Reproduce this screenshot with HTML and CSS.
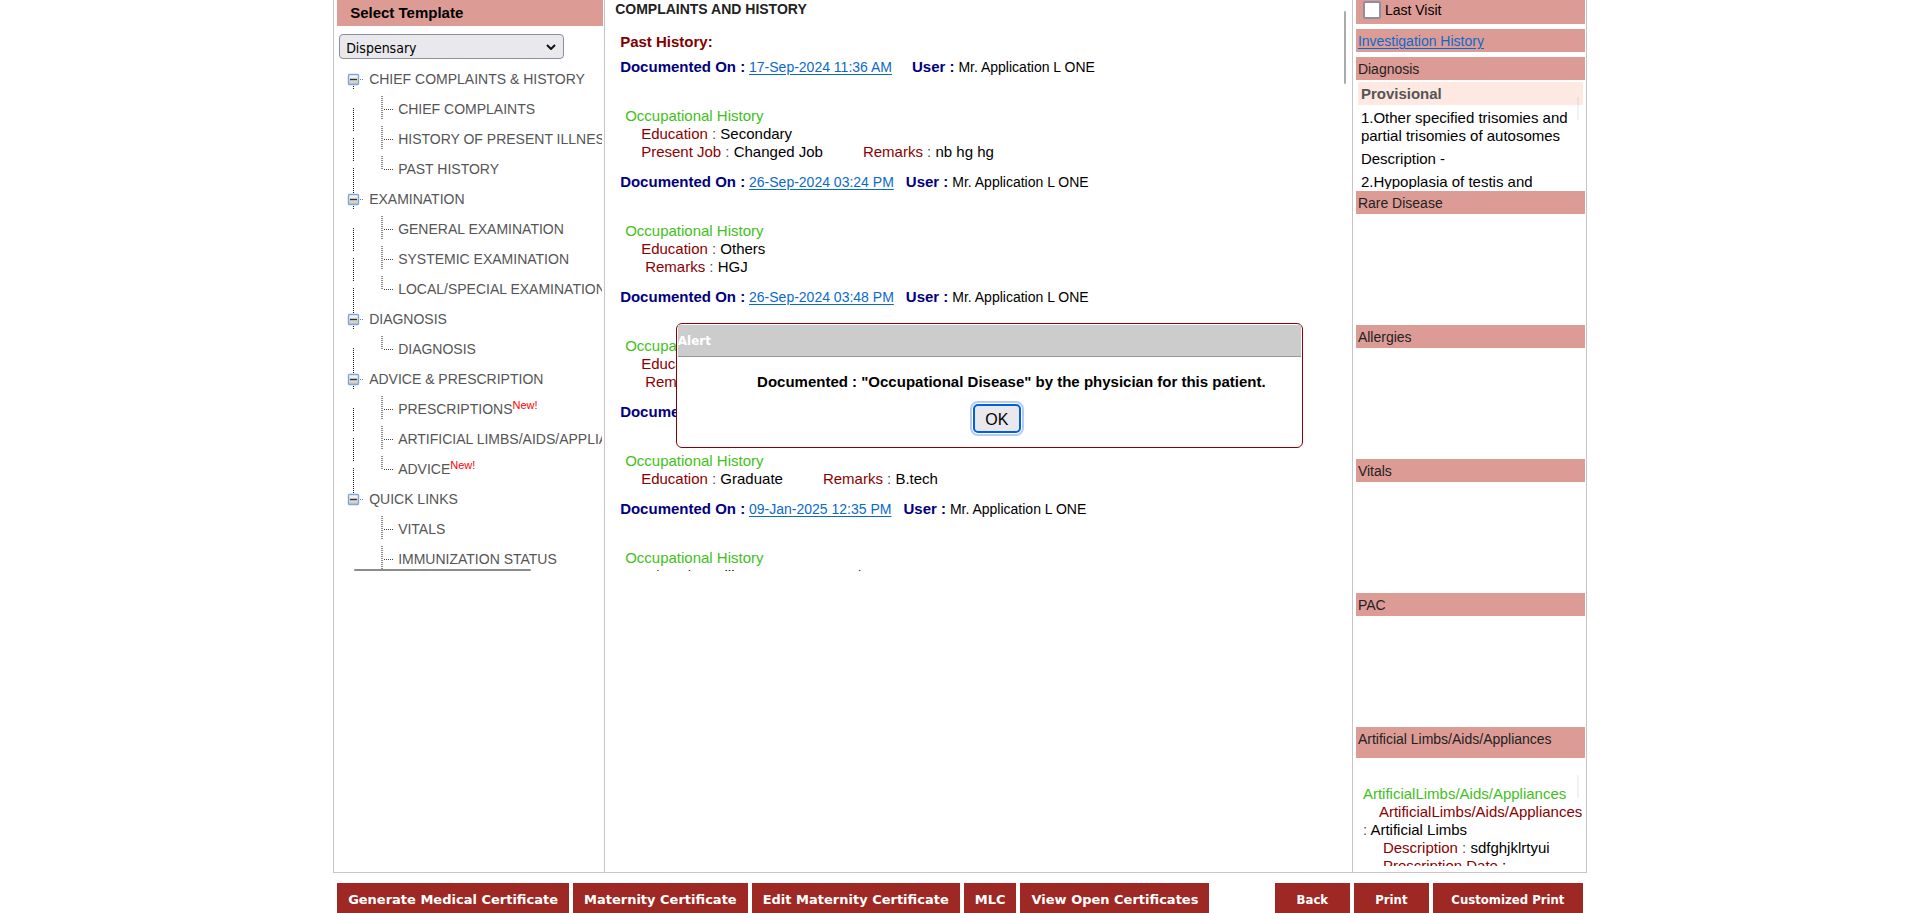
FILE: index.html
```
<!DOCTYPE html>
<html lang="en">
<head>
<meta charset="utf-8">
<title>Patient Visit Summary</title>
<link rel="stylesheet" href="styles.css">
</head>
<body>
<svg class="defs" width="0" height="0" aria-hidden="true">
  <defs>
    <linearGradient id="face" x1="0" y1="0" x2="0" y2="1">
      <stop offset="0" stop-color="#ffffff"/><stop offset="1" stop-color="#c9c5b8"/>
    </linearGradient>
    <g id="toggle">
      <rect x="3.5" y="8.5" width="10" height="10" rx="1" fill="url(#face)" stroke="#7ba6dc" stroke-width="1.4"/>
      <path d="M5 13.5h7" stroke="#333" stroke-width="1.4"/>
      <path d="M15 13.5h4" stroke="#777" stroke-dasharray="1 1"/>
    </g>
    <path id="up" d="M8.5 0v8" stroke="#111" stroke-dasharray="1 1"/>
    <path id="down" d="M8.5 20v4" stroke="#111" stroke-dasharray="1 1"/>
    <path id="trunk" d="M8.5 12v24" stroke="#111" stroke-dasharray="1 1"/>
    <path id="teebar" d="M37 0v24" stroke="#888" stroke-width="2" stroke-dasharray="1 1"/>
    <path id="endbar" d="M37 0v14" stroke="#888" stroke-width="2" stroke-dasharray="1 1"/>
    <path id="arm" d="M39 13.5h9" stroke="#444" stroke-dasharray="1 1"/>
  </defs>
</svg>

<main class="frame">
  <aside class="templates">
    <div class="pane">
      <h2 class="bar bar-title"><label for="template">Select Template</label></h2>
      <div class="picker">
        <select id="template"><option>Dispensary</option></select>
        <svg class="chevron" width="10" height="6" viewBox="0 0 10 6" aria-hidden="true"><path d="M1 1l4 4 4-4" fill="none" stroke="#111" stroke-width="2"/></svg>
      </div>
      <ul class="tree">
        <li class="node parent"><svg class="guide"><use href="#toggle"/><use href="#down"/></svg>CHIEF COMPLAINTS &amp; HISTORY</li>
        <li class="node"><svg class="guide"><use href="#trunk"/><use href="#teebar"/><use href="#arm"/></svg>CHIEF COMPLAINTS</li>
        <li class="node"><svg class="guide"><use href="#trunk"/><use href="#teebar"/><use href="#arm"/></svg>HISTORY OF PRESENT ILLNESS</li>
        <li class="node"><svg class="guide"><use href="#trunk"/><use href="#endbar"/><use href="#arm"/></svg>PAST HISTORY</li>
        <li class="node parent"><svg class="guide"><use href="#up"/><use href="#toggle"/><use href="#down"/></svg>EXAMINATION</li>
        <li class="node"><svg class="guide"><use href="#trunk"/><use href="#teebar"/><use href="#arm"/></svg>GENERAL EXAMINATION</li>
        <li class="node"><svg class="guide"><use href="#trunk"/><use href="#teebar"/><use href="#arm"/></svg>SYSTEMIC EXAMINATION</li>
        <li class="node"><svg class="guide"><use href="#trunk"/><use href="#endbar"/><use href="#arm"/></svg>LOCAL/SPECIAL EXAMINATION</li>
        <li class="node parent"><svg class="guide"><use href="#up"/><use href="#toggle"/><use href="#down"/></svg>DIAGNOSIS</li>
        <li class="node"><svg class="guide"><use href="#trunk"/><use href="#endbar"/><use href="#arm"/></svg>DIAGNOSIS</li>
        <li class="node parent"><svg class="guide"><use href="#up"/><use href="#toggle"/><use href="#down"/></svg>ADVICE &amp; PRESCRIPTION</li>
        <li class="node"><svg class="guide"><use href="#trunk"/><use href="#teebar"/><use href="#arm"/></svg>PRESCRIPTIONS<sup class="new">New!</sup></li>
        <li class="node"><svg class="guide"><use href="#trunk"/><use href="#teebar"/><use href="#arm"/></svg>ARTIFICIAL LIMBS/AIDS/APPLIANCES</li>
        <li class="node"><svg class="guide"><use href="#trunk"/><use href="#endbar"/><use href="#arm"/></svg>ADVICE<sup class="new">New!</sup></li>
        <li class="node parent"><svg class="guide"><use href="#up"/><use href="#toggle"/></svg>QUICK LINKS</li>
        <li class="node"><svg class="guide"><use href="#teebar"/><use href="#arm"/></svg>VITALS</li>
        <li class="node"><svg class="guide"><use href="#teebar"/><use href="#arm"/></svg>IMMUNIZATION STATUS</li>
      </ul>
      <span class="thumb thumb-x"></span>
    </div>
  </aside>

  <section class="history">
    <div class="pane">
      <h1 class="heading">COMPLAINTS AND HISTORY</h1>
      <h2 class="subheading">Past History:</h2>

      <article class="entry">
        <p class="stamp"><b>Documented On :</b> <a href="#e1">17-Sep-2024 11:36 AM</a><b class="user user-wide">User :</b> Mr. Application L ONE</p>
        <h3 class="topic">Occupational History</h3>
        <p class="fact"><i>Education</i> <s>:</s> Secondary</p>
        <p class="fact"><i>Present Job</i> <s>:</s> Changed Job<i class="next">Remarks</i> <s>:</s> nb hg hg</p>
      </article>
      <article class="entry">
        <p class="stamp"><b>Documented On :</b> <a href="#e2">26-Sep-2024 03:24 PM</a><b class="user">User :</b> Mr. Application L ONE</p>
        <h3 class="topic">Occupational History</h3>
        <p class="fact"><i>Education</i> <s>:</s> Others</p>
        <p class="fact fact-in"><i>Remarks</i> <s>:</s> HGJ</p>
      </article>
      <article class="entry">
        <p class="stamp"><b>Documented On :</b> <a href="#e3">26-Sep-2024 03:48 PM</a><b class="user">User :</b> Mr. Application L ONE</p>
        <h3 class="topic">Occupational History</h3>
        <p class="fact"><i>Education</i> <s>:</s></p>
        <p class="fact fact-in"><i>Remarks</i> <s>:</s></p>
      </article>
      <article class="entry">
        <p class="stamp"><b>Documented On :</b></p>
        <h3 class="topic">Occupational History</h3>
        <p class="fact"><i>Education</i> <s>:</s> Graduate<i class="next">Remarks</i> <s>:</s> B.tech</p>
      </article>
      <article class="entry">
        <p class="stamp"><b>Documented On :</b> <a href="#e5">09-Jan-2025 12:35 PM</a><b class="user">User :</b> Mr. Application L ONE</p>
        <h3 class="topic">Occupational History</h3>
        <p class="fact"><i>Education</i> <s>:</s> Illiterate<i class="next">Remarks</i> <s>:</s> test</p>
      </article>
      <span class="thumb thumb-y"></span>
    </div>
  </section>

  <aside class="summary">
    <label class="bar last-visit"><input type="checkbox">Last Visit</label>
    <div class="bar bar-gap"><a href="#investigation">Investigation History</a></div>
    <section>
      <h2 class="bar">Diagnosis</h2>
      <div class="body diagnosis">
        <h3 class="provisional">Provisional</h3>
        <p>1.Other specified trisomies and partial trisomies of autosomes</p>
        <p>Description -</p>
        <p>2.Hypoplasia of testis and</p>
      </div>
    </section>
    <section><h2 class="bar">Rare Disease</h2><div class="body"></div></section>
    <section><h2 class="bar">Allergies</h2><div class="body"></div></section>
    <section><h2 class="bar">Vitals</h2><div class="body"></div></section>
    <section><h2 class="bar">PAC</h2><div class="body"></div></section>
    <section>
      <h2 class="bar bar-tall">Artificial Limbs/Aids/Appliances</h2>
      <div class="body limbs">
        <h3>ArtificialLimbs/Aids/Appliances</h3>
        <p class="lead"><i>ArtificialLimbs/Aids/Appliances</i> <s>:</s> Artificial Limbs</p>
        <p class="detail"><i>Description</i> <s>:</s> sdfghjklrtyui</p>
        <p class="detail"><i>Prescription Date</i> :</p>
      </div>
    </section>
  </aside>
</main>

<footer class="actions">
  <button type="button">Generate Medical Certificate</button>
  <button type="button">Maternity Certificate</button>
  <button type="button">Edit Maternity Certificate</button>
  <button type="button">MLC</button>
  <button type="button">View Open Certificates</button>
  <span class="spacer"></span>
  <button type="button" class="narrow">Back</button>
  <button type="button" class="narrow">Print</button>
  <button type="button" class="narrow wide">Customized Print</button>
</footer>

<div class="dialog" role="alertdialog" aria-labelledby="dlg-title" aria-describedby="dlg-text">
  <h2 class="dialog-title" id="dlg-title">Alert</h2>
  <div class="dialog-body">
    <p class="message" id="dlg-text">Documented : "Occupational Disease" by the physician for this patient.</p>
    <button type="button" class="ok">OK</button>
  </div>
</div>
</body>
</html>
```

FILE: styles.css
```
* { box-sizing: border-box; }

body {
  margin: 0;
  min-height: 100vh;
  display: flex;
  flex-direction: column;
  background: #fff;
  color: #000;
  font: 15px/18px "Liberation Sans", Arial, sans-serif;
  overflow: hidden;
}

h1, h2, h3, p, ul { margin: 0; padding: 0; font-size: inherit; font-weight: normal; }
i, s { font-style: normal; text-decoration: none; }
i { color: #8b0000; }
s { color: #555; }

a {
  color: #0a6acb;
  text-decoration: underline 1px;
  text-underline-offset: 2px;
}

.defs { position: absolute; }

.frame {
  width: 65.3%;
  margin: 0 auto;
  flex: 1;
  display: grid;
  grid-template-columns: 271px minmax(0, 1fr) 234px;
  border: 1px solid #c6c6c6;
  border-top: 0;
}

.pane { position: relative; height: 571px; overflow: hidden; }

.thumb { position: absolute; border-radius: 2px; }
.thumb-x { left: 17px; bottom: 0; width: 177px; height: 2px; background: #8c8c8c; }
.thumb-y { right: 6px; top: 11px; width: 2px; height: 73px; background: #ababab; }

/* Template tree */
.templates { border-right: 1px solid #c6c6c6; padding: 0 1px 0 3px; }

.bar { display: block; background: #dd9b96; }
.bar-title { height: 26px; padding: 4px 13px; font-weight: bold; }

.picker { position: relative; width: 225px; margin: 8px 0 0 2px; }
.picker select {
  display: block;
  width: 100%;
  height: 25px;
  padding: 2px 6px 0;
  appearance: none;
  border: 1px solid #8f8f9d;
  border-radius: 4px;
  background: #e9e9ed;
  color: #000;
  font: 14px "DejaVu Sans Condensed", sans-serif;
}
.chevron { position: absolute; right: 8px; top: 10px; pointer-events: none; }

.tree {
  list-style: none;
  margin: 7px 1px 0 0;
  padding-left: 8px;
  overflow: hidden;
  color: #555;
  font-size: 14px;
}
.node {
  display: flex;
  align-items: center;
  height: 24px;
  margin-bottom: 6px;
  padding-top: 2px;
  white-space: nowrap;
}
.guide {
  flex: none;
  width: 53px;
  height: 24px;
  margin-top: -2px;
  overflow: visible;
  fill: none;
}
.parent .guide { width: 24px; }
.new { align-self: flex-start; color: #f00; font-size: 11px; line-height: 14px; }

/* History */
.heading { padding-left: 10px; color: #222; font-size: 14px; font-weight: bold; }
.subheading { margin: 15px 0 7px 15px; color: #800000; font-weight: bold; }
.entry { margin: 0 0 12px 15px; }
.stamp { font-size: 14px; }
.stamp b { color: #000080; font-size: 15px; }
.user { margin-left: 12px; }
.user-wide { margin-left: 20px; }
.topic { margin: 31px 0 0 5px; color: #42c01a; }
.fact { margin-left: 21px; }
.fact-in { margin-left: 25px; }
.next { margin-left: 40px; }

/* Summary */
.summary {
  border-left: 1px solid #c6c6c6;
  padding: 0 1px 0 3px;
}
.summary .bar {
  height: 23px;
  padding: 3px 2px;
  color: #222;
  font-size: 14px;
}
.summary .last-visit {
  display: flex;
  align-items: center;
  gap: 4px;
  height: 24px;
  padding: 0 7px 4px;
  color: #000;
}
.last-visit input {
  appearance: none;
  width: 18px;
  height: 18px;
  margin: 0;
  border: 2px solid #8f8f9d;
  border-radius: 2px;
  background: #fff;
}
.summary .bar-gap { margin: 5px 0; }
.body { position: relative; height: 111px; overflow: hidden; }
.summary .bar-tall { height: 31px; }

.diagnosis { height: 109px; margin-bottom: 2px; padding: 2px 2px 0; }
.provisional { height: 23px; padding: 3px; background: #fde9e2; color: #555; font-weight: bold; }
.diagnosis p { margin: 5px 3px 0; }
.diagnosis .provisional + p { margin-top: 4px; }

.limbs { height: 108px; padding: 27px 5px 0 7px; }
.limbs h3 { color: #42c01a; }
.lead { text-indent: 16px; }
.detail { padding-left: 20px; }

.diagnosis::after, .limbs::after {
  content: "";
  position: absolute;
  right: 6px;
  top: 17px;
  width: 2px;
  height: 23px;
  background: #0000000d;
}

/* Footer */
.actions {
  display: flex;
  gap: 4px;
  width: 65.3%;
  margin: 0 auto;
  padding: 10px 4px 0;
}
.actions button {
  height: 30px;
  padding: 2px 11px 0;
  border: 0;
  background: #9e2823;
  color: #fff;
  font: bold 13px "DejaVu Sans", Verdana, sans-serif;
  white-space: nowrap;
}
.spacer { flex: 1; }
.actions .narrow { min-width: 75px; font-family: "DejaVu Sans Condensed", Tahoma, sans-serif; }
.actions .wide { min-width: 150px; }

/* Alert */
.dialog {
  position: absolute;
  left: 35.2%;
  top: 323px;
  width: 627px;
  padding: 1px;
  border: 1px solid #8b0000;
  border-radius: 6px;
  background: #fff;
}
.dialog-title {
  height: 32px;
  padding: 7px 0;
  border-bottom: 1px solid #999;
  background: #ccc;
  color: #fff;
  font: bold 12px/18px "DejaVu Sans", Verdana, sans-serif;
}
.dialog-body { padding: 16px 0 13px 15px; text-align: center; }
.message { padding-left: 29px; font-weight: bold; }
.ok {
  display: block;
  width: 48px;
  height: 29px;
  margin: 13px auto 0;
  padding: 2px 0 0;
  border: 2px solid #0060df;
  border-radius: 5px;
  outline: 2px solid #b5cdf3;
  outline-offset: 1px;
  background: #e9e9ed;
  color: #000;
  font: 16px "Liberation Sans", Arial, sans-serif;
}
```
